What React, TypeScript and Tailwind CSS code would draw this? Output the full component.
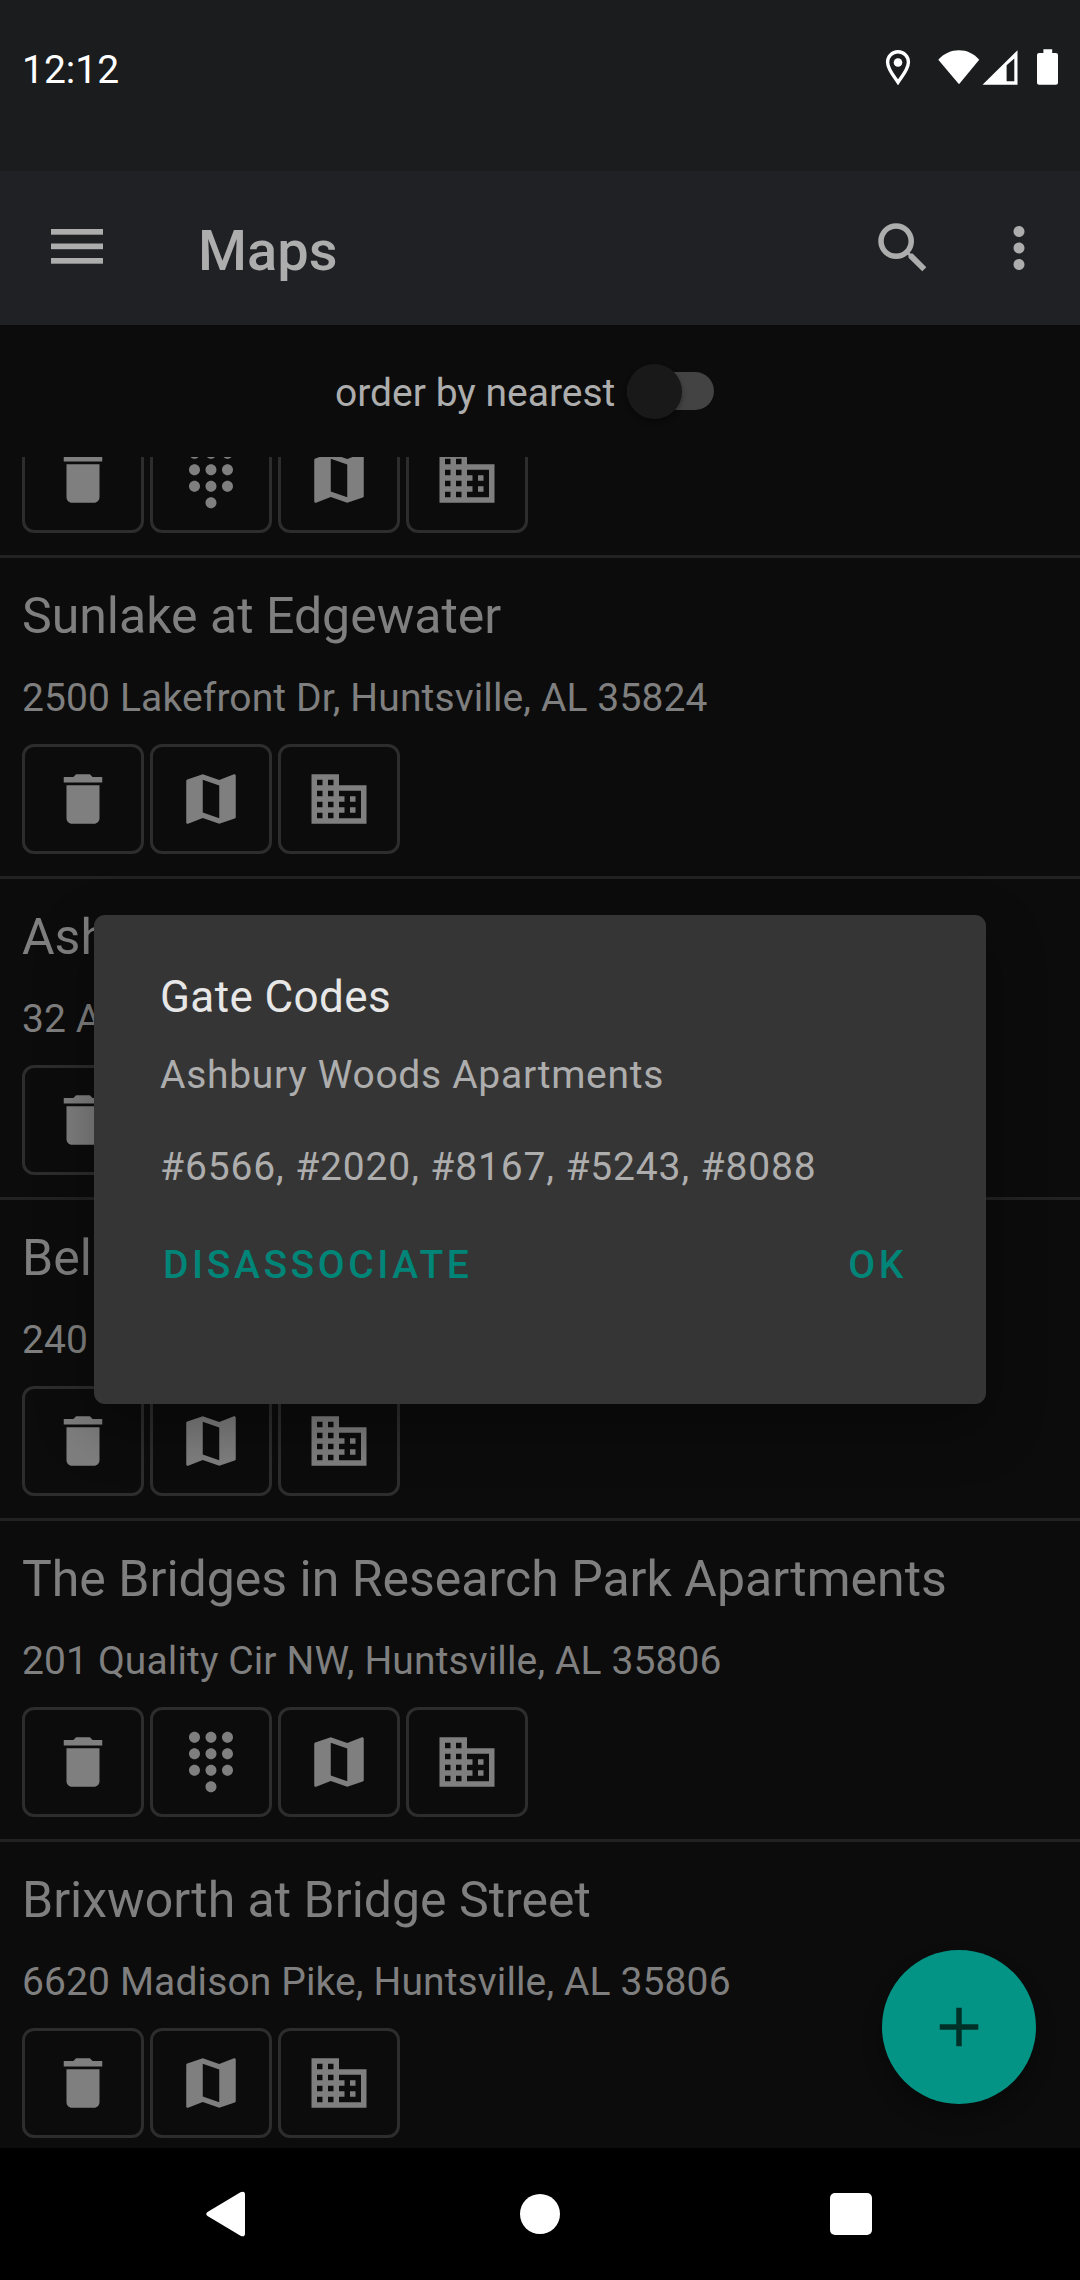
import React from "react";
import type { IconType } from "react-icons";
import {
  MdAdd,
  MdBusiness,
  MdDelete,
  MdDialpad,
  MdMap,
  MdMoreVert,
  MdSearch,
} from "react-icons/md";

type Place = { name: string; address: string; hasCodes?: boolean };

const places: Place[] = [
  { name: "Sunlake at Edgewater", address: "2500 Lakefront Dr, Huntsville, AL 35824" },
  { name: "Ash", address: "32 A" },
  { name: "Bel", address: "240" },
  {
    name: "The Bridges in Research Park Apartments",
    address: "201 Quality Cir NW, Huntsville, AL 35806",
    hasCodes: true,
  },
  { name: "Brixworth at Bridge Street", address: "6620 Madison Pike, Huntsville, AL 35806" },
];

function StatusBar() {
  return (
    <div className="flex h-[171px] items-start justify-between bg-[#1b1c1d] pl-[22px] pr-[22px] text-white">
      <span className="mt-[46px] text-[39px] leading-[48px]">12:12</span>
      <div className="mt-[49px] flex h-[36px] items-start">
        <svg width="26" height="36" viewBox="0 0 26 36" fill="none">
          <path
            d="M13 2.8C7 2.8 2.6 7.500 2.600 13.200C2.600 20.200 9.500 28 13 33.300C16.500 28 23.400 20.200 23.400 13.200C23.400 7.500 19 2.800 13 2.800Z"
            stroke="white"
            strokeWidth="3.400"
          />
          <circle cx="13" cy="13.500" r="4.300" fill="white" />
        </svg>
        <svg className="ml-[27px]" width="42" height="36" viewBox="0 0 42 36" fill="white">
          <path d="M0.300 10.800C6 4.500 13 1.300 21 1.300S35.500 4.500 41.200 10.800L21 35.300Z" />
        </svg>
        <svg className="ml-[2px]" width="36" height="36" viewBox="0 0 36 36" fill="white">
          <path
            fillRule="evenodd"
            d="M0.500 35.800L35.500 1.300V35.800ZM24.600 16.300V32.200H32.300V9.500Z"
          />
        </svg>
        <svg className="ml-[19px]" width="21" height="36" viewBox="0 0 21 36" fill="white">
          <path d="M6.400 0.300H15.200V4H18.900Q21 4 21 6.100V33.700Q21 35.700 18.900 35.700H2.100Q0 35.700 0 33.700V6.100Q0 4 2.100 4H6.400Z" />
        </svg>
      </div>
    </div>
  );
}

function AppBar() {
  return (
    <header className="flex h-[154px] items-center bg-[#202125] text-[#adadad]">
      <svg
        className="-mt-[2px] ml-[51px]"
        width="52"
        height="36"
        viewBox="0 0 52 36"
        fill="currentColor"
      >
        <rect y="0" width="52" height="5.700" />
        <rect y="14.500" width="52" height="5.700" />
        <rect y="29" width="52" height="5.700" />
      </svg>
      <h1 className="ml-[95px] mt-[6px] flex-1 text-[56px] font-medium leading-[64px]">Maps</h1>
      <MdSearch className="size-[66px]" />
      <MdMoreVert className="ml-[50px] mr-[28px] size-[66px]" />
    </header>
  );
}

function OrderToggle() {
  return (
    <div className="flex h-[132px] items-center pl-[335px]">
      <span className="mt-[4px] w-[292px] whitespace-nowrap text-[39px] leading-[46px] text-[#adadad]">
        order by nearest
      </span>
      <div className="flex h-[38px] w-[87px] items-center rounded-full bg-[#434343]">
        <div className="size-[55px] shrink-0 rounded-full bg-[#191919] shadow-[0_3px_5px_rgba(0,0,0,0.35)]" />
      </div>
    </div>
  );
}

function IconButton({ icon: Icon }: { icon: IconType }) {
  return (
    <button className="flex h-[110px] w-[122px] items-center justify-center rounded-[12px] border-[3px] border-[#2d2d2d]">
      <Icon className="size-[66px] shrink-0" />
    </button>
  );
}

function Actions({ hasCodes }: { hasCodes?: boolean }) {
  return (
    <div className="flex gap-[6px]">
      <IconButton icon={MdDelete} />
      {hasCodes && <IconButton icon={MdDialpad} />}
      <IconButton icon={MdMap} />
      <IconButton icon={MdBusiness} />
    </div>
  );
}

function PlaceRow({ place }: { place: Place }) {
  return (
    <li className="h-[321px] shrink-0 border-b-[3px] border-[#222222] px-[22px] pt-[29px]">
      <h2 className="whitespace-nowrap text-[50px] leading-[58px]">{place.name}</h2>
      <p className="mb-[23px] mt-[30px] whitespace-nowrap text-[39px] leading-[46px] tracking-[0.120px]">
        {place.address}
      </p>
      <Actions hasCodes={place.hasCodes} />
    </li>
  );
}

function NavBar() {
  return (
    <nav className="flex h-[132px] items-center bg-black text-white">
      <svg className="ml-[206px]" width="39" height="46" viewBox="0 0 39 46" fill="currentColor">
        <path d="M1.500 21L34.500 1.200Q39 -0.500 39 3.500V42.500Q39 46.500 34.500 44.800L1.500 25Q-1 23 1.500 21Z" />
      </svg>
      <div className="ml-[275px] size-[40px] rounded-full bg-white" />
      <div className="ml-[270px] size-[42px] rounded-[5px] bg-white" />
    </nav>
  );
}

function GateCodesDialog() {
  return (
    <div
      role="dialog"
      className="absolute left-[94px] top-[915px] flex h-[489px] w-[892px] flex-col rounded-[11px] bg-[#353535] px-[66px] pt-[56px] text-[#adadad] shadow-[0_22px_60px_rgba(0,0,0,0.32)]"
    >
      <h2 className="text-[44px] leading-[52px] tracking-[0.4px] text-[#e7e7e7]">Gate Codes</h2>
      <p className="mt-[29px] text-[39px] leading-[46px] tracking-[0.700px]">
        Ashbury Woods Apartments
      </p>
      <p className="mt-[46px] text-[39px] leading-[46px] tracking-[0.870px]">
        #6566, #2020, #8167, #5243, #8088
      </p>
      <div className="mt-[52px] flex justify-between pl-[3px] pr-[13px] text-[39px] font-medium leading-[46px] tracking-[3.600px] text-[#018578]">
        <button>DISASSOCIATE</button>
        <button>OK</button>
      </div>
    </div>
  );
}

export default function App() {
  return (
    <div className="relative flex h-[2280px] w-[1080px] flex-col overflow-hidden bg-[#0c0c0c] font-[Roboto,sans-serif]">
      <StatusBar />
      <AppBar />
      <OrderToggle />
      <ul className="flex min-h-0 flex-1 flex-col overflow-hidden text-[#7f7f7f]">
        <li className="-mt-[34px] h-[135px] shrink-0 border-b-[3px] border-[#222222] px-[22px]">
          <Actions hasCodes />
        </li>
        {places.map((place) => (
          <PlaceRow key={place.address} place={place} />
        ))}
      </ul>
      <NavBar />
      <button className="absolute left-[882px] top-[1950px] flex size-[154px] items-center justify-center rounded-full bg-[#039486] text-[#013029] shadow-[0_12px_20px_rgba(0,0,0,0.3)]">
        <MdAdd className="size-[66px]" />
      </button>
      <GateCodesDialog />
    </div>
  );
}
